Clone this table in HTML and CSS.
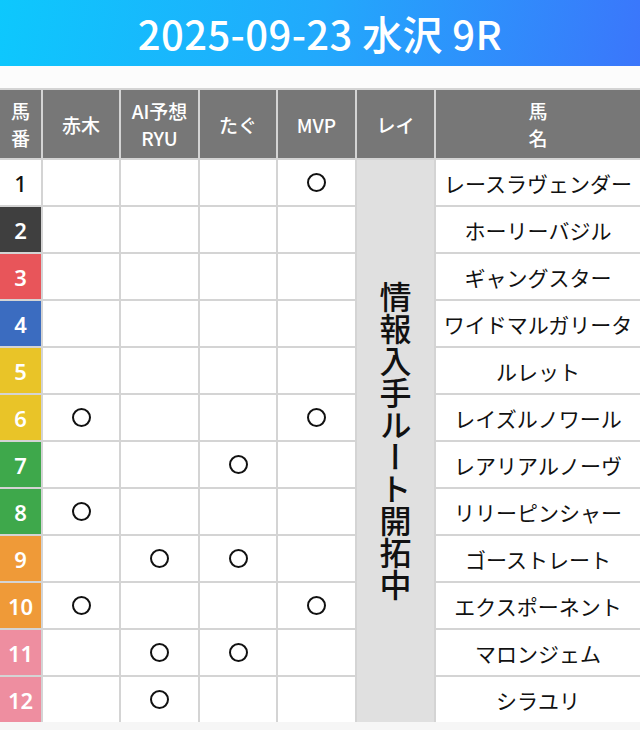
FILE: index.html
```html
<!DOCTYPE html>
<html lang="ja">
<head>
<meta charset="utf-8">
<title>2025-09-23 水沢 9R</title>
<link rel="stylesheet" href="styles.css">
</head>
<body>
<header class="banner"><h1 class="title">2025-09-23 水沢 9R</h1></header>
<div class="spacer"></div>
<div class="grid">
  <div class="th">馬<br>番</div>
  <div class="th">赤木</div>
  <div class="th">AI予想<br>RYU</div>
  <div class="th">たぐ</div>
  <div class="th">MVP</div>
  <div class="th">レイ</div>
  <div class="th">馬<br>名</div>

  <div class="rei">情報入手ルート開拓中</div>

  <div class="num n1">1</div><div class="c"></div><div class="c"></div><div class="c"></div><div class="c"><span class="mark" title="○"></span></div><div class="name">レースラヴェンダー</div>
  <div class="num n2">2</div><div class="c"></div><div class="c"></div><div class="c"></div><div class="c"></div><div class="name">ホーリーバジル</div>
  <div class="num n3">3</div><div class="c"></div><div class="c"></div><div class="c"></div><div class="c"></div><div class="name">ギャングスター</div>
  <div class="num n4">4</div><div class="c"></div><div class="c"></div><div class="c"></div><div class="c"></div><div class="name">ワイドマルガリータ</div>
  <div class="num n5">5</div><div class="c"></div><div class="c"></div><div class="c"></div><div class="c"></div><div class="name">ルレット</div>
  <div class="num n5">6</div><div class="c"><span class="mark" title="○"></span></div><div class="c"></div><div class="c"></div><div class="c"><span class="mark" title="○"></span></div><div class="name">レイズルノワール</div>
  <div class="num n7">7</div><div class="c"></div><div class="c"></div><div class="c"><span class="mark" title="○"></span></div><div class="c"></div><div class="name">レアリアルノーヴ</div>
  <div class="num n7">8</div><div class="c"><span class="mark" title="○"></span></div><div class="c"></div><div class="c"></div><div class="c"></div><div class="name">リリーピンシャー</div>
  <div class="num n9">9</div><div class="c"></div><div class="c"><span class="mark" title="○"></span></div><div class="c"><span class="mark" title="○"></span></div><div class="c"></div><div class="name">ゴーストレート</div>
  <div class="num n9">10</div><div class="c"><span class="mark" title="○"></span></div><div class="c"></div><div class="c"></div><div class="c"><span class="mark" title="○"></span></div><div class="name">エクスポーネント</div>
  <div class="num n11">11</div><div class="c"></div><div class="c"><span class="mark" title="○"></span></div><div class="c"><span class="mark" title="○"></span></div><div class="c"></div><div class="name">マロンジェム</div>
  <div class="num n11">12</div><div class="c"></div><div class="c"><span class="mark" title="○"></span></div><div class="c"></div><div class="c"></div><div class="name">シラユリ</div>
</div>
</body>
</html>
```

FILE: styles.css
```css
html, body {
  margin: 0;
  padding: 0;
  background: #f6f6f6;
  font-family: "Noto Sans CJK JP", "Noto Sans", sans-serif;
}

.banner {
  height: 66px;
  background: linear-gradient(100deg, #0dc8fd 0%, #22a9fc 50%, #3b76fb 100%);
  display: flex;
  align-items: center;
  justify-content: center;
}

.title {
  margin: 0;
  color: #fff;
  font-size: 40px;
  font-weight: 500;
  letter-spacing: 0.4px;
}

.spacer {
  height: 22px;
  background: #fcfcfc;
}

.grid {
  display: grid;
  grid-template-columns: 41px 76px 77px 76px 77px 77px 1fr;
  grid-template-rows: 68px repeat(12, 45px);
  gap: 2px;
  padding-top: 2px;
  background: #d4d4d4;
}

.th {
  background: #777777;
  color: #fff;
  font-size: 19px;
  font-weight: 500;
  line-height: 27px;
  display: flex;
  align-items: center;
  justify-content: center;
  text-align: center;
}

.rei {
  grid-column: 6;
  grid-row: 2 / span 12;
  background: #e0e0e0;
  color: #111;
  writing-mode: vertical-rl;
  font-size: 32px;
  letter-spacing: 0;
  font-weight: 500;
  display: flex;
  align-items: center;
  justify-content: center;
}

.num {
  display: flex;
  align-items: center;
  justify-content: center;
  font-family: "Noto Sans", sans-serif;
  font-weight: 600;
  font-size: 22px;
  color: #fff;
}

.n1 { background: #fff; color: #111; font-weight: 500; }
.n2 { background: #3f3f3f; }
.n3 { background: #e8555a; }
.n4 { background: #3b6cc0; }
.n5 { background: #e9c428; }
.n7 { background: #3ea84b; }
.n9 { background: #ef9a38; }
.n11 { background: #ee8ea0; }

.c {
  background: #fff;
  display: flex;
  align-items: center;
  justify-content: center;
}

.mark {
  display: block;
  width: 19px;
  height: 19px;
  box-sizing: border-box;
  border: 2.4px solid #111;
  border-radius: 50%;
}

.name {
  background: #fff;
  display: flex;
  align-items: center;
  justify-content: center;
  font-size: 21px;
  color: #111;
}
```
